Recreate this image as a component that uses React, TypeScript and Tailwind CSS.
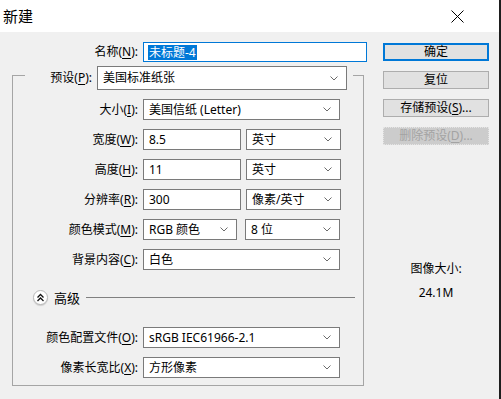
import clsx from 'clsx';

const FONT = "font-['Noto_Sans','Noto_Sans_CJK_SC',sans-serif]";

function Key({ k }: { k: string }) {
    return <span className="underline underline-offset-[2px] decoration-1">{k}</span>;
}

function Label({ text, k, className }: { text: string; k: string; className?: string }) {
    return (
        <span className={clsx('text-right whitespace-nowrap shrink-0', className)}>
            {text}(<Key k={k} />):
        </span>
    );
}

function Chevron() {
    return (
        <svg width="8" height="5" viewBox="0 0 8 5" className="shrink-0">
            <path d="M0.5 0.5 L4 4 L7.5 0.5" fill="none" stroke="#6b6b6b" strokeWidth="1" />
        </svg>
    );
}

function Select({ value, className }: { value: string; className?: string }) {
    return (
        <div className={clsx('flex items-center justify-between border border-[#7a7a7a] bg-white pl-[5px] pr-[8px]', className)}>
            <span className="whitespace-nowrap">{value}</span>
            <Chevron />
        </div>
    );
}

function Input({ value, className }: { value: string; className?: string }) {
    return (
        <div className={clsx('flex items-center border border-[#7a7a7a] bg-white pl-[5px]', className)}>
            {value}
        </div>
    );
}

function Row({ children }: { children: React.ReactNode }) {
    return <div className="flex items-center gap-[5px] h-[21px]">{children}</div>;
}

function Button({ children, primary, disabled }: { children: React.ReactNode; primary?: boolean; disabled?: boolean }) {
    return (
        <div
            className={clsx(
                'h-[18px] flex items-center justify-center',
                primary && 'border-2 border-[#0078d7] bg-[#e1e1e1]',
                !primary && !disabled && 'border border-[#adadad] bg-[#e1e1e1]',
                disabled && 'border border-dotted border-[#e4e4e4] bg-[#cccccc] text-[#a3a3a3]',
            )}
        >
            {children}
        </div>
    );
}

export default function App() {
    return (
        <div className={clsx('w-[501px] h-[399px] flex flex-col border-r-2 border-[#1e1e1e] overflow-hidden text-[12px] text-black leading-[16px]', FONT)}>
            <div className="h-[32px] shrink-0 bg-white flex items-center justify-between pl-[3px] pr-[35px]">
                <span className="text-[15px]">新建</span>
                <svg width="13" height="13" viewBox="0 0 13 13">
                    <path d="M0.5 0.5 L12.5 12.5 M12.5 0.5 L0.5 12.5" stroke="#000" strokeWidth="1" />
                </svg>
            </div>

            <div className="flex-1 bg-[#f0f0f0] flex">
                <div className="w-[383px] shrink-0 pl-[12px] pt-[10px] flex flex-col">
                    <div className="flex items-center gap-[5px] h-[20px]">
                        <Label text="名称" k="N" className="w-[126px]" />
                        <div className="w-[224px] h-[20px] border border-[#0078d7] bg-white pl-[4px] flex items-center">
                            <span className="bg-[#0078d7] text-white px-[1px] leading-[15px]">未标题-4</span>
                        </div>
                    </div>

                    <fieldset className="mt-[-1px] w-[352px] border border-[#a5a5a5] pb-[7px]">
                        <legend className="ml-[12px] pt-[5px] pr-[6px]">
                            <div className="flex items-center gap-[5px]">
                                <Label text="预设" k="P" className="w-[67px]" />
                                <Select value="美国标准纸张" className="w-[250px] h-[24px]" />
                            </div>
                        </legend>

                        <div className="flex flex-col gap-[9px] pt-[9px]">
                            <Row>
                                <Label text="大小" k="I" className="w-[125px]" />
                                <Select value="美国信纸 (Letter)" className="w-[197px] h-[21px]" />
                            </Row>
                            <Row>
                                <Label text="宽度" k="W" className="w-[125px]" />
                                <Input value="8.5" className="w-[98px] h-[21px]" />
                                <Select value="英寸" className="w-[95px] h-[21px]" />
                            </Row>
                            <Row>
                                <Label text="高度" k="H" className="w-[125px]" />
                                <Input value="11" className="w-[98px] h-[21px]" />
                                <Select value="英寸" className="w-[95px] h-[21px]" />
                            </Row>
                            <Row>
                                <Label text="分辨率" k="R" className="w-[125px]" />
                                <Input value="300" className="w-[98px] h-[21px]" />
                                <Select value="像素/英寸" className="w-[95px] h-[21px]" />
                            </Row>
                            <Row>
                                <Label text="颜色模式" k="M" className="w-[125px]" />
                                <Select value="RGB 颜色" className="w-[94px] h-[21px]" />
                                <Select value="8 位" className="w-[95px] h-[21px] ml-[3px]" />
                            </Row>
                            <Row>
                                <Label text="背景内容" k="C" className="w-[125px]" />
                                <Select value="白色" className="w-[197px] h-[21px]" />
                            </Row>
                        </div>

                        <div className="mt-[19px] h-[17px] flex items-center pl-[20px] gap-[6px]">
                            <div className="w-[15px] h-[15px] shrink-0 rounded-full border border-[#b9b9b9] bg-white shadow-[0_1px_1px_rgba(0,0,0,0.15)] flex items-center justify-center">
                                <svg width="9" height="9" viewBox="0 0 9 9">
                                    <path d="M1.5 4.5 L4.5 1.5 L7.5 4.5 M1.5 8 L4.5 5 L7.5 8" fill="none" stroke="#111" strokeWidth="1.3" />
                                </svg>
                            </div>
                            <span className="text-[13px] shrink-0">高级</span>
                            <div className="w-[269px] h-[1px] shrink-0 bg-[#808080]" />
                        </div>

                        <div className="flex flex-col gap-[9px] mt-[21px]">
                            <Row>
                                <Label text="颜色配置文件" k="O" className="w-[125px]" />
                                <Select value="sRGB IEC61966-2.1" className="w-[197px] h-[21px]" />
                            </Row>
                            <Row>
                                <Label text="像素长宽比" k="X" className="w-[125px]" />
                                <Select value="方形像素" className="w-[197px] h-[21px]" />
                            </Row>
                        </div>
                    </fieldset>
                </div>

                <div className="w-[106px] shrink-0 pt-[11px] flex flex-col">
                    <div className="flex flex-col gap-[10px]">
                        <Button primary>确定</Button>
                        <Button>复位</Button>
                        <Button>
                            存储预设(<Key k="S" />)...
                        </Button>
                        <Button disabled>
                            删除预设(<Key k="D" />)...
                        </Button>
                    </div>
                    <div className="mt-[116px] flex flex-col items-center">
                        <span>图像大小:</span>
                        <span className="mt-[8px]">24.1M</span>
                    </div>
                </div>
            </div>
        </div>
    );
}
